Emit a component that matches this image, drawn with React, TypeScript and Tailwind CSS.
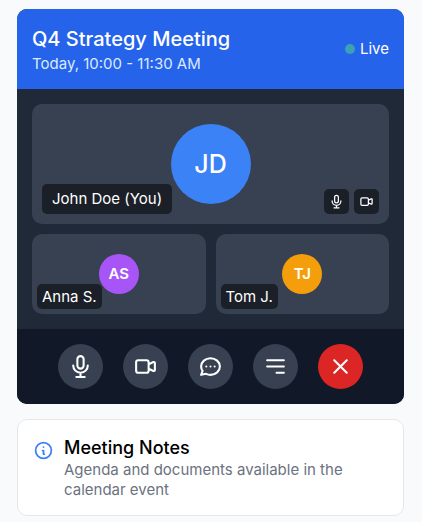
import type { ReactNode } from "react";
import {
  HiOutlineChat,
  HiOutlineInformationCircle,
  HiOutlineMenuAlt3,
  HiOutlineMicrophone,
  HiOutlineVideoCamera,
  HiOutlineX,
} from "react-icons/hi";

function SmallTile({ name, initials, color }: { name: string; initials: string; color: string }) {
  return (
    <div className="relative flex h-20 items-center justify-center rounded-[10px] bg-[#374151]">
      <div className={`flex size-10 items-center justify-center rounded-full text-[15px] leading-5 font-semibold ${color}`}>
        {initials}
      </div>
      <div className="absolute bottom-[5px] left-[5px] flex h-[25px] items-center rounded-[5px] bg-black/50 px-[5px] text-[15px] leading-5">
        {name}
      </div>
    </div>
  );
}

function ControlButton({ label, color, children }: { label: string; color: string; children: ReactNode }) {
  return (
    <button
      type="button"
      aria-label={label}
      className={`flex size-[45px] items-center justify-center rounded-full ${color}`}
    >
      {children}
    </button>
  );
}

export default function App() {
  return (
    <main className="flex min-h-screen flex-col gap-[15px] bg-[#f9fafb] pt-[9px] pr-[18px] pb-1.5 pl-[17px] font-['Inter',sans-serif]">
      <section className="overflow-hidden rounded-[10px] bg-[#1f2937] text-white">
        <header className="flex items-center justify-between bg-[#2563eb] p-[15px]">
          <div>
            <h1 className="text-[20px] leading-[30px] font-medium">Q4 Strategy Meeting</h1>
            <p className="text-[15px] leading-5 text-[#dbeafe]">Today, 10:00 - 11:30 AM</p>
          </div>
          <div className="flex items-center gap-[5px] text-[15px] leading-5">
            <span className="size-2.5 rounded-full bg-[#3ba2b5]" />
            <span>Live</span>
          </div>
        </header>

        <div className="grid grid-cols-2 gap-2.5 p-[15px]">
          <div className="relative col-span-2 flex h-[120px] items-center justify-center rounded-[10px] bg-[#374151]">
            <div className="flex size-20 items-center justify-center rounded-full bg-[#3b82f6] text-[25px] leading-[35px] font-medium">
              JD
            </div>
            <div className="absolute bottom-2.5 left-2.5 rounded-[5px] bg-black/50 px-2.5 py-[5px] text-[15px] leading-5">
              John Doe (You)
            </div>
            <div className="absolute right-2.5 bottom-2.5 flex gap-[5px]">
              <span className="rounded-[5px] bg-black/50 p-[5px]">
                <HiOutlineMicrophone className="size-[15px]" />
              </span>
              <span className="rounded-[5px] bg-black/50 p-[5px]">
                <HiOutlineVideoCamera className="size-[15px]" />
              </span>
            </div>
          </div>
          <SmallTile name="Anna S." initials="AS" color="bg-[#a855f7]" />
          <SmallTile name="Tom J." initials="TJ" color="bg-[#f59e0b]" />
        </div>

        <div className="flex justify-center gap-5 bg-[#111827] p-[15px]">
          <ControlButton label="Microphone" color="bg-[#374151]">
            <HiOutlineMicrophone className="size-[25px]" />
          </ControlButton>
          <ControlButton label="Camera" color="bg-[#374151]">
            <HiOutlineVideoCamera className="size-[25px]" />
          </ControlButton>
          <ControlButton label="Chat" color="bg-[#374151]">
            <HiOutlineChat className="size-[25px]" />
          </ControlButton>
          <ControlButton label="Menu" color="bg-[#374151]">
            <HiOutlineMenuAlt3 className="size-[25px]" />
          </ControlButton>
          <ControlButton label="Leave meeting" color="bg-[#dc2626]">
            <HiOutlineX className="size-[25px]" />
          </ControlButton>
        </div>
      </section>

      <section className="flex items-start gap-2.5 rounded-[10px] border border-[#e5e7eb] bg-white p-[15px]">
        <HiOutlineInformationCircle className="mt-[5px] size-[21px] shrink-0 text-[#3b82f6]" />
        <div>
          <h2 className="text-[18px] leading-[25px] font-medium text-black">Meeting Notes</h2>
          <p className="text-[15px] leading-5 text-[#6b7280]">Agenda and documents available in the calendar event</p>
        </div>
      </section>
    </main>
  );
}
